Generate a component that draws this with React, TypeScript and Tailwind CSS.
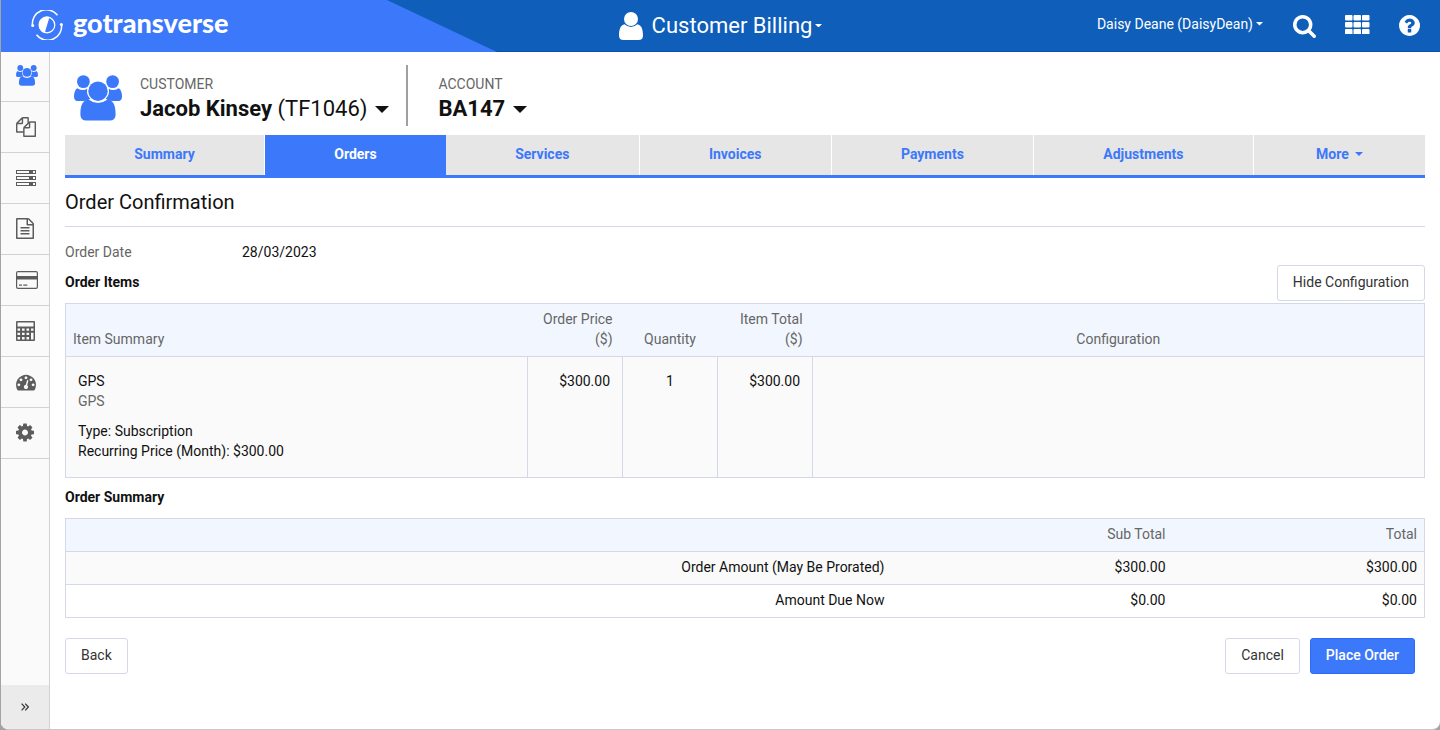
import type { ReactNode } from "react";

type IconProps = { className?: string };

function Glyph({ viewBox, className, children }: { viewBox: string; className?: string; children: ReactNode }) {
  return (
    <svg viewBox={viewBox} fill="currentColor" aria-hidden="true" className={className}>
      {children}
    </svg>
  );
}

function UsersIcon({ className }: IconProps) {
  return (
    <Glyph viewBox="0 0 48 46" className={className}>
      <circle cx="9.4" cy="6.6" r="6.4" />
      <circle cx="38.6" cy="6.6" r="6.4" />
      <path d="M3.2 13.2Q9.4 16.8 13.2 13.6A11 11 0 0 0 16.200 23.800Q13.500 26.600 3 26Q0 25.600 0 21.6Q0 15.4 3.2 13.2Z" />
      <path d="M44.8 13.2Q38.6 16.8 34.8 13.6A11 11 0 0 1 31.800 23.800Q34.500 26.600 45 26Q48 25.600 48 21.6Q48 15.4 44.8 13.2Z" />
      <circle cx="24" cy="16.2" r="9.7" />
      <path d="M14.4 24.600Q24 31.6 33.6 24.600C39 25 41.6 30 41.6 39.4Q41.6 45.4 35.6 45.4H12.4Q6.4 45.4 6.4 39.4C6.4 30 9 25 14.4 24.600Z" />
    </Glyph>
  );
}

function FilesIcon({ className }: IconProps) {
  return (
    <Glyph viewBox="0 0 1792 1792" className={className}>
      <path d="M1696 384q40 0 68 28t28 68v1216q0 40-28 68t-68 28h-960q-40 0-68-28t-28-68v-288h-544q-40 0-68-28t-28-68v-672q0-40 20-88t48-76l408-408q28-28 76-48t88-20h416q40 0 68 28t28 68v328q68-40 128-40h416zm-544 213l-299 299h299v-299zm-640-384l-299 299h299v-299zm196 647l316-316v-416h-384v416q0 40-28 68t-68 28h-416v640h512v-256q0-40 20-88t48-76zm956 804v-1152h-384v416q0 40-28 68t-68 28h-416v640h896z" />
    </Glyph>
  );
}

function ServerIcon({ className }: IconProps) {
  return (
    <Glyph viewBox="0 0 20 16" className={className}>
      <path fillRule="evenodd" d="M0 0h20v4H0zM1 1v2h12V1zM17 1v2h2V1zM0 6h20v4H0zM1 7v2h12V7zM17 7v2h2V7zM0 12h20v4H0zM1 13v2h12v-2zM17 13v2h2v-2z" />
    </Glyph>
  );
}

function DocumentIcon({ className }: IconProps) {
  return (
    <Glyph viewBox="128 0 1536 1792" className={className}>
      <path d="M1596 380q28 28 48 76t20 88v1152q0 40-28 68t-68 28h-1344q-40 0-68-28t-28-68v-1600q0-40 28-68t68-28h896q40 0 88 20t76 48zm-444-244v376h376q-10-29-22-41l-313-313q-12-12-41-22zm384 1528v-1024h-416q-40 0-68-28t-28-68v-416h-768v1536h1280zm-1024-864q0-14 9-23t23-9h704q14 0 23 9t9 23v64q0 14-9 23t-23 9h-704q-14 0-23-9t-9-23v-64zm736 224q14 0 23 9t9 23v64q0 14-9 23t-23 9h-704q-14 0-23-9t-9-23v-64q0-14 9-23t23-9h704zm0 256q14 0 23 9t9 23v64q0 14-9 23t-23 9h-704q-14 0-23-9t-9-23v-64q0-14 9-23t23-9h704z" />
    </Glyph>
  );
}

function CardIcon({ className }: IconProps) {
  return (
    <Glyph viewBox="0 0 22 18" className={className}>
      <path fillRule="evenodd" d="M2 0h18a2 2 0 0 1 2 2v14a2 2 0 0 1-2 2H2a2 2 0 0 1-2-2V2a2 2 0 0 1 2-2zM2 1.2a.8.8 0 0 0-.8.8v3h19.600V2a.8.8 0 0 0-.8-.8zM1.200 8.500V16c0 .5.3.8.8.8h18c.5 0 .8-.3.8-.8V8.500zM3 13.500h3v1.300H3zM7.300 13.500h4v1.300h-4z" />
    </Glyph>
  );
}

function CalculatorIcon({ className }: IconProps) {
  return (
    <Glyph viewBox="0 0 19 20" className={className}>
      <path
        fillRule="evenodd"
        d="M1 0h17a1 1 0 0 1 1 1v18a1 1 0 0 1-1 1H1a1 1 0 0 1-1-1V1a1 1 0 0 1 1-1zM1.500 1.400v4h16v-4zM1.500 7.500v2.300h2.600V7.500zM6 7.500v2.300h2.600V7.500zM10.500 7.500v2.300h2.600V7.500zM15 7.500v2.300h2.500V7.500zM1.500 11.700V14h2.600v-2.300zM6 11.700V14h2.600v-2.300zM10.500 11.700V14h2.600v-2.300zM15 11.700v6.900h2.500v-6.900zM1.500 16v2.600h2.600V16zM6 16v2.600h2.600V16zM10.500 16v2.600h2.600V16z"
      />
    </Glyph>
  );
}

function GaugeIcon({ className }: IconProps) {
  return (
    <Glyph viewBox="0 0 1792 1792" className={className}>
      <path d="M384 1152q0-53-37.500-90.500t-90.500-37.500-90.500 37.500-37.500 90.500 37.500 90.500 90.500 37.500 90.500-37.500 37.500-90.500zm192-448q0-53-37.500-90.500t-90.500-37.500-90.500 37.500-37.500 90.500 37.500 90.500 90.500 37.500 90.500-37.500 37.500-90.500zm428 481l101-382q6-26-7.500-48.500t-38.500-29.500-48 6.500-30 39.500l-101 382q-60 5-107 43.500t-63 98.500q-20 77 20 146t117 89 146-20 89-117q16-60-6-117t-72-91zm660-33q0-53-37.500-90.500t-90.500-37.500-90.500 37.500-37.500 90.500 37.500 90.500 90.500 37.500 90.500-37.500 37.500-90.500zm-640-640q0-53-37.500-90.500t-90.500-37.500-90.500 37.500-37.500 90.500 37.500 90.500 90.500 37.500 90.500-37.500 37.500-90.500zm448 192q0-53-37.500-90.500t-90.500-37.500-90.500 37.500-37.500 90.500 37.500 90.500 90.500 37.500 90.500-37.500 37.500-90.500zm320 448q0 261-141 483-19 29-54 29h-1402q-35 0-54-29-141-221-141-483 0-182 71-348t191-286 286-191 348-71 348 71 286 191 191 286 71 348z" />
    </Glyph>
  );
}

function CogIcon({ className }: IconProps) {
  return (
    <Glyph viewBox="128 0 1536 1792" className={className}>
      <path d="M1152 896q0-106-75-181t-181-75-181 75-75 181 75 181 181 75 181-75 75-181zm512-109v222q0 12-8 23t-20 13l-185 28q-19 54-39 91 35 50 107 138 10 12 10 25t-9 23q-27 37-99 108t-94 71q-12 0-26-9l-138-108q-44 23-91 38-16 136-29 186-7 28-36 28h-222q-14 0-24.500-8.500t-11.500-21.500l-28-184q-49-16-90-37l-141 107q-10 9-25 9-14 0-25-11-126-114-165-168-7-10-7-23 0-12 8-23 15-21 51-66.500t54-70.500q-27-50-41-99l-183-27q-13-2-21-12.500t-8-23.500v-222q0-12 8-23t19-13l186-28q14-46 39-92-40-57-107-138-10-12-10-24 0-10 9-23 26-36 98.500-107.500t94.500-71.500q13 0 26 10l138 107q44-23 91-38 16-136 29-186 7-28 36-28h222q14 0 24.500 8.500t11.500 21.500l28 184q49 16 90 37l142-107q9-9 24-9 13 0 25 10 129 119 165 170 7 8 7 22 0 12-8 23-15 21-51 66.500t-54 70.500q26 50 41 98l183 28q13 2 21 12.500t8 23.500z" />
    </Glyph>
  );
}

function SearchIcon({ className }: IconProps) {
  return (
    <Glyph viewBox="64 128 1664 1664" className={className}>
      <path d="M1216 832q0-185-131.500-316.500t-316.500-131.500-316.500 131.500-131.500 316.500 131.500 316.500 316.500 131.500 316.500-131.500 131.500-316.500zm512 832q0 52-38 90t-90 38q-54 0-90-38l-343-342q-179 124-399 124-143 0-273.500-55.500t-225-150-150-225-55.500-273.500 55.500-273.500 150-225 225-150 273.500-55.500 273.500 55.500 225 150 150 225 55.500 273.500q0 220-124 399l343 343q37 37 37 90z" />
    </Glyph>
  );
}

function GridIcon({ className }: IconProps) {
  return (
    <Glyph viewBox="0 0 25 19" className={className}>
      {[0, 7, 14].map((y) =>
        [0, 8.5, 17].map((x) => <rect key={`${x}-${y}`} x={x} y={y} width="7.5" height="5.5" rx="1" />),
      )}
    </Glyph>
  );
}

function HelpIcon({ className }: IconProps) {
  return (
    <Glyph viewBox="128 128 1536 1536" className={className}>
      <path d="M1024 1376v-192q0-14-9-23t-23-9h-192q-14 0-23 9t-9 23v192q0 14 9 23t23 9h192q14 0 23-9t9-23zm256-672q0-88-55.500-163t-138.500-116-170-41q-243 0-371 213-15 24 8 42l132 100q7 6 19 6 16 0 25-12 53-68 86-92 34-24 86-24 48 0 85.500 26t37.500 59q0 38-20 61t-68 45q-63 28-115.500 86.500t-52.500 125.500v36q0 14 9 23t23 9h192q14 0 23-9t9-23q0-19 21.500-49.500t54.500-49.500q32-18 49-28.500t46-35 44.500-48 28-60.500 12.500-81zm384 192q0 209-103 385.500t-279.500 279.500-385.500 103-385.500-103-279.500-279.500-103-385.500 103-385.500 279.500-279.500 385.500-103 385.500 103 279.500 279.500 103 385.500z" />
    </Glyph>
  );
}

function PersonIcon({ className }: IconProps) {
  return (
    <Glyph viewBox="0 0 24 28" className={className}>
      <circle cx="12" cy="7" r="7" />
      <path d="M5.600 12.200Q12 18 18.400 12.200C22.500 12.800 24 17.500 24 23.500Q24 28 19.500 28H4.500Q0 28 0 23.500C0 17.500 1.500 12.800 5.600 12.200Z" />
    </Glyph>
  );
}

function LogoMark({ className }: IconProps) {
  return (
    <svg viewBox="0 0 32 30" fill="none" stroke="currentColor" aria-hidden="true" className={className}>
      <path d="M1.500 15.500A14 14 0 0 1 26.500 5.200" strokeWidth="1.500" />
      <path d="M30.500 14.500A14 14 0 0 1 5.500 24.800" strokeWidth="1.500" />
      <circle cx="1.700" cy="15.500" r="1.500" fill="currentColor" stroke="none" />
      <circle cx="30.300" cy="14.500" r="1.500" fill="currentColor" stroke="none" />
      <circle cx="16" cy="15" r="7.800" strokeWidth="1.200" />
      <path d="M18.500 6.900A8.300 8.300 0 1 0 13.700 23Z" fill="currentColor" stroke="none" />
    </svg>
  );
}

function Caret({ className }: IconProps) {
  return (
    <Glyph viewBox="0 0 8 4" className={className}>
      <path d="M0 0h8L4 4z" />
    </Glyph>
  );
}

const sideItems = [
  { label: "Customers", icon: <UsersIcon className="w-[22px] text-[#3c78fa]" /> },
  { label: "Orders", icon: <FilesIcon className="w-5" /> },
  { label: "Services", icon: <ServerIcon className="w-5" /> },
  { label: "Documents", icon: <DocumentIcon className="w-[18px]" /> },
  { label: "Payments", icon: <CardIcon className="w-[22px]" /> },
  { label: "Calculator", icon: <CalculatorIcon className="w-[19px]" /> },
  { label: "Dashboard", icon: <GaugeIcon className="w-5" /> },
  { label: "Settings", icon: <CogIcon className="w-[18px]" /> },
];

const tabs = ["Summary", "Orders", "Services", "Invoices", "Payments", "Adjustments"];

const plainButton =
  "h-9 rounded-[3px] border border-[#d5d9e6] bg-white px-[15px] pb-[2px] text-sm text-[#333] hover:bg-gray-50";

function TopBar() {
  return (
    <header className="relative grid h-[52px] grid-cols-[1fr_auto_1fr] items-center border-b border-[#0a50ac] bg-[#0e5eba] text-white">
      <svg viewBox="0 0 496 52" aria-hidden="true" className="absolute left-0 top-0 h-[52px] w-[496px]">
        <path d="M0 0H386L496 52H0Z" fill="#3c78fa" />
      </svg>
      <a href="#home" className="relative flex items-center gap-[10px] pb-1 pl-[30px]">
        <LogoMark className="mt-[2px] w-8" />
        <span className="pb-[2px] font-[Lato] text-[27px] font-black leading-8">gotransverse</span>
      </a>
      <button type="button" className="flex items-center text-[22px] leading-8">
        <PersonIcon className="mr-[9px] w-6" />
        Customer Billing
        <Caret className="ml-[3px] w-[7px]" />
      </button>
      <div className="flex items-center justify-end pb-[3px] pr-5">
        <button type="button" className="flex items-center gap-[3px] text-sm">
          Daisy Deane (DaisyDean)
          <Caret className="w-[7px]" />
        </button>
        <button type="button" aria-label="Search" className="ml-[30px] mt-1">
          <SearchIcon className="w-[23px]" />
        </button>
        <button type="button" aria-label="Apps" className="ml-[29px]">
          <GridIcon className="w-[25px]" />
        </button>
        <button type="button" aria-label="Help" className="ml-[29px] mt-[3px]">
          <HelpIcon className="w-[21px]" />
        </button>
      </div>
    </header>
  );
}

function SideBar() {
  return (
    <nav className="flex w-[49px] shrink-0 flex-col border-r border-[#d2d2d2] bg-[#fafafa] text-[#5c5c5c]">
      {sideItems.map((item) => (
        <a
          key={item.label}
          href={`#${item.label.toLowerCase()}`}
          aria-label={item.label}
          className="flex h-[51px] items-center border-b border-[#d2d2d2] pb-px pl-[15px] first:h-[50px]"
        >
          {item.icon}
        </a>
      ))}
      <button type="button" aria-label="Expand menu" className="mt-auto flex h-11 items-center justify-center bg-[#ebebeb] text-[#333]">
        <svg viewBox="0 0 8 8" fill="none" stroke="currentColor" strokeWidth="1.200" className="w-2">
          <path d="M.6.6 3.800 4 .6 7.400M4.200.6 7.400 4 4.200 7.400" />
        </svg>
      </button>
    </nav>
  );
}

function AccountHeader() {
  return (
    <div className="flex h-[61px] items-center text-[#3c78fa]">
      <UsersIcon className="ml-[9px] mt-1 w-12" />
      <div className="ml-[18px] pt-[7px]">
        <div className="text-sm leading-5 text-[#666]">CUSTOMER</div>
        <button type="button" className="flex items-center text-[22px] leading-[30px] text-[#111]">
          <span className="font-bold">Jacob Kinsey</span>&nbsp;(TF1046)
          <Caret className="ml-2 w-[14px]" />
        </button>
      </div>
      <div className="ml-[17px] w-[2px] self-stretch bg-[#a0a0a0]" />
      <div className="ml-[30px] pt-[7px]">
        <div className="text-sm leading-5 text-[#666]">ACCOUNT</div>
        <button type="button" className="flex items-center text-[22px] leading-[30px] text-[#111]">
          <span className="font-bold">BA147</span>
          <Caret className="ml-2 w-[14px]" />
        </button>
      </div>
    </div>
  );
}

function TabBar() {
  return (
    <nav className="mt-[9px] flex border-b-[3px] border-[#3c78fa] text-sm font-bold text-[#3c78fa]">
      {tabs.map((tab) => (
        <a
          key={tab}
          href={`#tab-${tab.toLowerCase()}`}
          className={
            tab === "Orders"
              ? "flex h-10 grow items-center justify-center bg-[#3c78fa] px-4 pb-[2px] text-white"
              : "flex h-10 grow items-center justify-center border-r border-white bg-[#e6e6e6] px-4 pb-[2px]"
          }
        >
          {tab}
        </a>
      ))}
      <button type="button" className="flex h-10 grow items-center justify-center gap-[6px] bg-[#e6e6e6] px-[9px] pb-[2px]">
        More
        <Caret className="w-2" />
      </button>
    </nav>
  );
}

const line = "border-[#d5d9e6]";

function ItemsTable() {
  return (
    <table className="mt-[2px] w-full table-fixed border-collapse border border-[#d5d9e6] text-sm leading-5">
      <thead>
        <tr className="h-[53px] border-b border-[#d5d9e6] bg-[#f2f7ff] align-bottom text-[#666]">
          <th className="w-[34%] px-[7px] pb-[7px] text-left font-normal">Item Summary</th>
          <th className="w-[95px] pb-[7px] pr-[10px] text-right font-normal">
            Order Price
            <br />
            ($)
          </th>
          <th className="w-[95px] pb-[7px] text-center font-normal">Quantity</th>
          <th className="w-[95px] pb-[7px] pr-[10px] text-right font-normal">
            Item Total
            <br />
            ($)
          </th>
          <th className="pb-[7px] text-center font-normal">Configuration</th>
        </tr>
      </thead>
      <tbody>
        <tr className="h-[121px] bg-[#fafafa] align-top">
          <td className="px-3 pt-[14px]">
            <div>GPS</div>
            <div className="text-[#666]">GPS</div>
            <div className="mt-[10px]">Type: Subscription</div>
            <div>Recurring Price (Month): $300.00</div>
          </td>
          <td className={`border-l ${line} pr-3 pt-[14px] text-right`}>$300.00</td>
          <td className={`border-l ${line} pt-[14px] text-center`}>1</td>
          <td className={`border-l ${line} pr-3 pt-[14px] text-right`}>$300.00</td>
          <td className={`border-l ${line}`} />
        </tr>
      </tbody>
    </table>
  );
}

function SummaryTable() {
  return (
    <table className="mt-[11px] w-full table-fixed border-collapse border border-[#d5d9e6] text-right text-sm leading-5">
      <thead>
        <tr className="h-[33px] border-b border-[#d5d9e6] bg-[#f2f7ff] text-[#666]">
          <th className="w-[61%] px-2" />
          <th className="px-2 pb-[3px] font-normal">Sub Total</th>
          <th className="w-[251px] px-[7px] pb-[3px] font-normal">Total</th>
        </tr>
      </thead>
      <tbody>
        <tr className="h-[33px] border-b border-[#d5d9e6] bg-[#fafafa]">
          <td className="px-[10px] pb-[3px]">Order Amount (May Be Prorated)</td>
          <td className="px-2 pb-[3px]">$300.00</td>
          <td className="px-[7px] pb-[3px]">$300.00</td>
        </tr>
        <tr className="h-[33px]">
          <td className="px-[10px] pb-[3px]">Amount Due Now</td>
          <td className="px-2 pb-[3px]">$0.00</td>
          <td className="px-[7px] pb-[3px]">$0.00</td>
        </tr>
      </tbody>
    </table>
  );
}

export default function App() {
  return (
    <div className="flex min-h-screen bg-[#a3a3a3] pl-px font-[Roboto,sans-serif] text-[#111]">
      <div className="flex grow flex-col overflow-hidden rounded-b-lg border-b border-[#c8c8c8] bg-white">
        <TopBar />
        <div className="flex grow">
          <SideBar />
          <main className="min-w-0 grow px-[15px] pt-[13px]">
            <AccountHeader />
            <TabBar />
            <h1 className="border-b border-[#d5d9e6] pb-[10px] pt-[10px] text-xl leading-7">Order Confirmation</h1>
            <dl className="mt-[15px] flex text-sm leading-5">
              <dt className="w-[177px] text-[#666]">Order Date</dt>
              <dd>28/03/2023</dd>
            </dl>
            <div className="mt-[3px] flex items-center justify-between">
              <h2 className="pb-[2px] text-sm font-bold leading-5">Order Items</h2>
              <button type="button" className={plainButton}>
                Hide Configuration
              </button>
            </div>
            <ItemsTable />
            <h2 className="mt-[9px] text-sm font-bold leading-5">Order Summary</h2>
            <SummaryTable />
            <div className="mt-5 flex gap-[10px] pr-[10px]">
              <button type="button" className={`${plainButton} mr-auto`}>
                Back
              </button>
              <button type="button" className={plainButton}>
                Cancel
              </button>
              <button type="button" className="h-9 rounded-[3px] border border-[#2c6af5] bg-[#3c78fa] px-[15px] pb-[2px] text-sm font-medium text-white">
                Place Order
              </button>
            </div>
          </main>
        </div>
      </div>
    </div>
  );
}
